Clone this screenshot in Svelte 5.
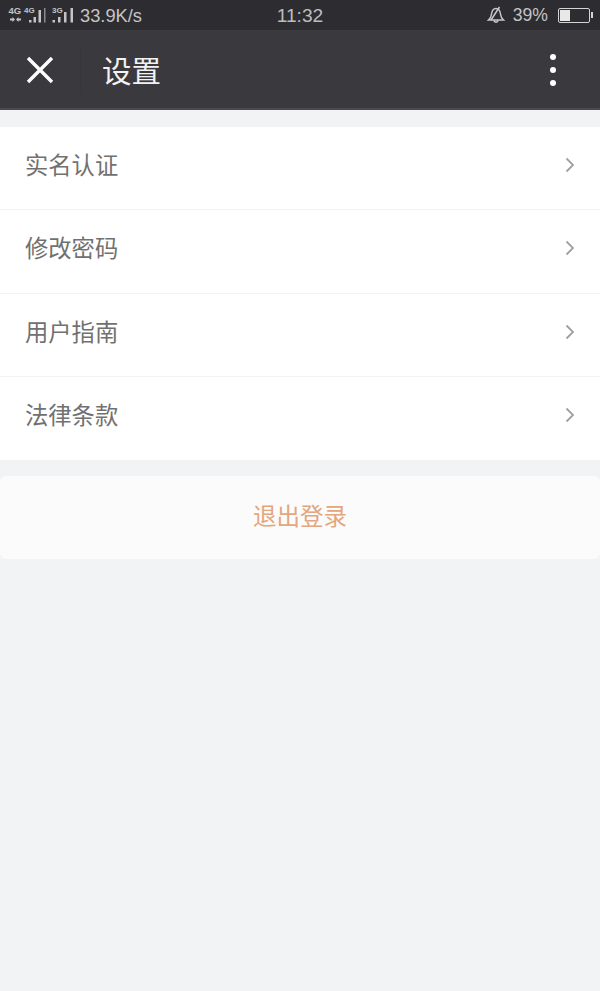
<script>
  const items = ['实名认证', '修改密码', '用户指南', '法律条款'];
</script>

<div class="page">
  <div class="status">
    <div class="st-left">
      <svg class="signal" width="76" height="30" viewBox="0 0 76 30" aria-hidden="true">
        <g fill="#c4c4c6">
          <path d="M10 18.500h2.500v-1.500l2.500 2.500-2.500 2.500v-1.500H10zM21 18.500h-2.500v-1.500L16 19.500l2.500 2.500v-1.500H21z"/>
          <rect x="29" y="20" width="2.500" height="2.500"/>
          <rect x="33.500" y="17" width="2.500" height="5.500"/>
          <rect x="38.500" y="10" width="2.500" height="12.500"/>
          <rect x="44" y="8" width="1.500" height="14.500" fill="#8a8a8c"/>
          <rect x="52.500" y="20" width="2.500" height="2.500"/>
          <rect x="58" y="17" width="2.500" height="5.500"/>
          <rect x="64" y="12" width="2.500" height="10.500"/>
          <rect x="70.500" y="8" width="2.500" height="14.500"/>
        </g>
        <text x="8.500" y="14" class="tiny">4G</text>
        <text x="24" y="13" class="tinier">4G</text>
        <text x="52" y="13" class="tinier">3G</text>
      </svg>
      <span class="speed">33.9K/s</span>
    </div>
    <span class="clock">11:32</span>
    <div class="st-right">
      <svg width="18" height="18" viewBox="0 0 18 18" fill="none" stroke="#c8c8ca" stroke-width="1.500" aria-hidden="true">
        <path d="M1.500 14c1.800-1.400 2.600-2.800 2.900-5.500C4.800 5 6.400 2.500 9 2.500s4.200 2.500 4.600 6c.3 2.700 1.100 4.100 2.900 5.500z"/>
        <path d="M6.800 14.500a2.300 2.300 0 0 0 4.400 0M4 14 12.500 1"/>
      </svg>
      <span class="batt-text">39%</span>
      <div class="batt"><div class="batt-fill"></div></div>
    </div>
  </div>

  <header class="nav">
    <button class="close" aria-label="关闭">
      <svg width="28" height="28" viewBox="0 0 28 28" stroke="#fff" stroke-width="3.400" aria-hidden="true">
        <path d="M2 2 26 26M26 2 2 26"/>
      </svg>
    </button>
    <div class="divider"></div>
    <h1>设置</h1>
    <div class="dots" aria-hidden="true"><i></i><i></i><i></i></div>
  </header>

  <main>
    <ul class="list">
      {#each items as item}
        <li>
          <span>{item}</span>
          <svg width="10" height="16" viewBox="0 0 10 16" fill="none" stroke="#a0a0a0" stroke-width="1.800" aria-hidden="true">
            <path d="M1.500 1.500 8 8l-6.500 6.500"/>
          </svg>
        </li>
      {/each}
    </ul>
    <button class="logout">退出登录</button>
  </main>
</div>

<style>
  :global(body) {
    margin: 0;
    background: #f2f3f5;
  }
  .page {
    width: 600px;
    height: 991px;
    overflow: hidden;
    background: #f2f3f5;
    font-family: "Noto Sans CJK SC", "Liberation Sans", sans-serif;
  }
  .status {
    height: 30px;
    box-sizing: border-box;
    background: #2d2d31;
    display: grid;
    grid-template-columns: 1fr auto 1fr;
    align-items: center;
    padding: 0 8px;
    color: #c4c4c6;
    font-family: "Liberation Sans", sans-serif;
    font-size: 18.300px;
  }
  .st-left {
    display: flex;
    align-items: center;
    gap: 4px;
  }
  .signal {
    flex: none;
    margin-left: -8px;
  }
  .tiny {
    font: 700 9.500px "Liberation Sans", sans-serif;
    fill: #c4c4c6;
  }
  .tinier {
    font: 700 8px "Liberation Sans", sans-serif;
    fill: #c4c4c6;
  }
  .speed { margin-top: 1px; }
  .clock {
    color: #bdbdbf;
    font-size: 19.200px;
    margin-top: 2px;
  }
  .st-right {
    display: flex;
    justify-content: flex-end;
    align-items: center;
    gap: 8px;
    padding-right: 2px;
  }
  .batt-text {
    margin-top: 1px;
    font-size: 17.600px;
  }
  .batt {
    position: relative;
    width: 32px;
    height: 15px;
    box-sizing: border-box;
    border: 1.500px solid #d4d4d6;
    border-radius: 2px;
    padding: 1px;
    margin-left: 2px;
    margin-top: 1px;
  }
  .batt::after {
    content: "";
    position: absolute;
    right: -3.500px;
    top: 3px;
    width: 2px;
    height: 6px;
    background: #d4d4d6;
  }
  .batt-fill {
    width: 10px;
    height: 100%;
    background: #e8e8e8;
  }
  .nav {
    height: 80px;
    box-sizing: border-box;
    background: #39393e;
    border-bottom: 2px solid #4a4a4e;
    display: flex;
    align-items: center;
    color: #f2f2f2;
  }
  .close {
    flex: none;
    width: 80px;
    height: 78px;
    padding: 2px 0 0;
    border: 0;
    background: none;
    display: flex;
    align-items: center;
    justify-content: center;
  }
  .divider {
    flex: none;
    width: 1px;
    height: 44px;
    background: #35353a;
  }
  h1 {
    margin: 2px 0 0 21px;
    font-size: 29.500px;
    font-weight: 400;
    line-height: 1;
    flex: 1;
  }
  .dots {
    display: flex;
    flex-direction: column;
    gap: 7px;
    margin: 2px 44px 0 0;
  }
  .dots i {
    display: block;
    width: 6px;
    height: 6px;
    border-radius: 50%;
    background: #fff;
  }
  main { padding-top: 17px; }
  .list {
    list-style: none;
    margin: 0;
    padding: 0;
    background: #fff;
  }
  li {
    height: 83.250px;
    box-sizing: border-box;
    display: flex;
    align-items: center;
    justify-content: space-between;
    padding: 0 25px 6px;
    font-size: 23.300px;
    color: #717171;
    border-bottom: 1px solid #f3f3f3;
  }
  li span { margin-bottom: 2px; }
  li:last-child { border-bottom: 0; }
  .logout {
    display: block;
    width: 100%;
    height: 83px;
    margin-top: 16px;
    border: 0;
    padding: 0 0 6px;
    border-radius: 6px;
    background: #fbfbfb;
    color: #e3a67e;
    font: 400 23.500px "Noto Sans CJK SC", sans-serif;
  }
</style>
